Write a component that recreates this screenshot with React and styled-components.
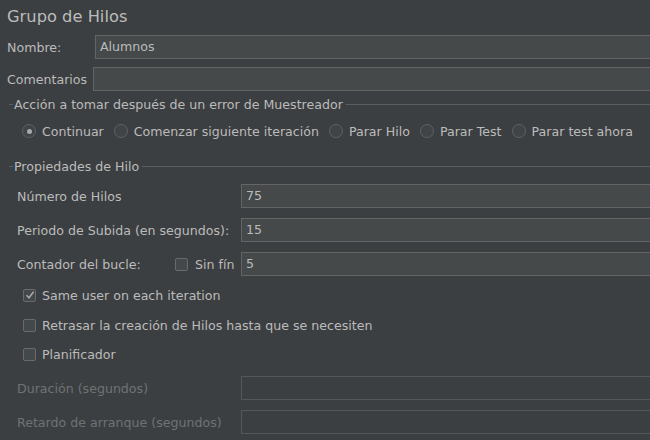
import React from "react";
import styled, { createGlobalStyle } from "styled-components";

const Global = createGlobalStyle`
  html, body {
    margin: 0;
    padding: 0;
    background: #3c3f41;
  }
  body {
    font-family: "DejaVu Sans", "Liberation Sans", sans-serif;
    font-size: 12.6px;
    color: #bbbbbb;
  }
`;

const Panel = styled.div`
  width: 650px;
  height: 440px;
  overflow: hidden;
  background: #3c3f41;
`;

const Title = styled.div`
  font-size: 16.3px;
  height: 36px;
  line-height: 36px;
  padding-left: 7px;
  margin-top: -1px;
`;

const Row = styled.div`
  display: flex;
  align-items: center;
  height: 24px;
  padding-left: ${(p) => p.$indent || 7}px;
  margin-bottom: ${(p) => p.$gap || 0}px;
`;

const Label = styled.div`
  width: ${(p) => p.$width}px;
  flex: none;
  white-space: nowrap;
  color: ${(p) => (p.$disabled ? "#6f7274" : "#bbbbbb")};
`;

const Field = styled.div`
  flex: 1;
  height: 24px;
  box-sizing: border-box;
  margin-right: -8px;
  border: 1px solid ${(p) => (p.$disabled ? "#55585a" : "#646464")};
  background: ${(p) => (p.$disabled ? "#3c3f41" : "#45494a")};
  padding-left: 4px;
  line-height: 22px;
  color: #bbbbbb;
`;

const Group = styled.div`
  display: flex;
  align-items: center;
  height: 14px;
  margin: ${(p) => p.$margin};
  padding-left: 9px;
  white-space: nowrap;
  &::before {
    content: "";
    width: 4px;
    height: 1px;
    background: #5b5e60;
    margin-right: 1px;
  }
  &::after {
    content: "";
    flex: 1;
    height: 1px;
    background: #5b5e60;
    margin-left: 3px;
  }
`;

const RadioRow = styled.div`
  display: flex;
  align-items: center;
  height: 20px;
  margin-top: 10px;
  padding-left: 22px;
  gap: 10px;
  white-space: nowrap;
`;

const Option = styled.label`
  display: flex;
  align-items: center;
  gap: 6px;
`;

const Radio = styled.span`
  width: 14px;
  height: 14px;
  box-sizing: border-box;
  border-radius: 50%;
  border: 1px solid #5f6264;
  background: #404446;
  display: flex;
  align-items: center;
  justify-content: center;
  &::after {
    content: "";
    display: ${(p) => (p.$on ? "block" : "none")};
    width: 5px;
    height: 5px;
    border-radius: 50%;
    background: #a9a9a9;
  }
`;

const Box = styled.span`
  width: 13px;
  height: 13px;
  box-sizing: border-box;
  border: 1px solid #686a6c;
  border-radius: 2px;
  background: #43494a;
  display: flex;
  align-items: center;
  justify-content: center;
  flex: none;
`;

const CheckRow = styled.div`
  display: flex;
  align-items: center;
  gap: 6px;
  height: 20px;
  padding-left: 23px;
  margin-bottom: ${(p) => p.$gap || 0}px;
`;

const Inline = styled.div`
  display: flex;
  align-items: center;
  gap: 7px;
  width: 224px;
  flex: none;
`;

const Check = ({ on }) => (
  <Box>
    {on && (
      <svg width="10" height="10" viewBox="0 0 10 10">
        <path d="M1.5 5.2 L4 7.8 L8.6 1.8" fill="none" stroke="#a8a8a8" strokeWidth="1.6" />
      </svg>
    )}
  </Box>
);

const radios = [
  ["Continuar", true],
  ["Comenzar siguiente iteración", false],
  ["Parar Hilo", false],
  ["Parar Test", false],
  ["Parar test ahora", false],
];

export default function App() {
  return (
    <Panel>
      <Global />
      <Title>Grupo de Hilos</Title>
      <Row $gap={8}>
        <Label $width={88}>Nombre:</Label>
        <Field>Alumnos</Field>
      </Row>
      <Row>
        <Label $width={86}>Comentarios</Label>
        <Field />
      </Row>
      <Group $margin="6px 0 0 0">Acción a tomar después de un error de Muestreador</Group>
      <RadioRow>
        {radios.map(([t, on]) => (
          <Option key={t}>
            <Radio $on={on} />
            {t}
          </Option>
        ))}
      </RadioRow>
      <Group $margin="18px 0 11px 0">Propiedades de Hilo</Group>
      <Row $indent={17} $gap={10}>
        <Label $width={224}>Número de Hilos</Label>
        <Field>75</Field>
      </Row>
      <Row $indent={17} $gap={10}>
        <Label $width={224}>Periodo de Subida (en segundos):</Label>
        <Field>15</Field>
      </Row>
      <Row $indent={17} $gap={9}>
        <Inline>
          <Label $width={151}>Contador del bucle:</Label>
          <Check />
          <span>Sin fín</span>
        </Inline>
        <Field>5</Field>
      </Row>
      <CheckRow $gap={10}>
        <Check on />
        Same user on each iteration
      </CheckRow>
      <CheckRow $gap={9}>
        <Check />
        Retrasar la creación de Hilos hasta que se necesiten
      </CheckRow>
      <CheckRow $gap={12}>
        <Check />
        Planificador
      </CheckRow>
      <Row $indent={17} $gap={10}>
        <Label $width={224} $disabled>Duración (segundos)</Label>
        <Field $disabled />
      </Row>
      <Row $indent={17}>
        <Label $width={224} $disabled>Retardo de arranque (segundos)</Label>
        <Field $disabled />
      </Row>
    </Panel>
  );
}
